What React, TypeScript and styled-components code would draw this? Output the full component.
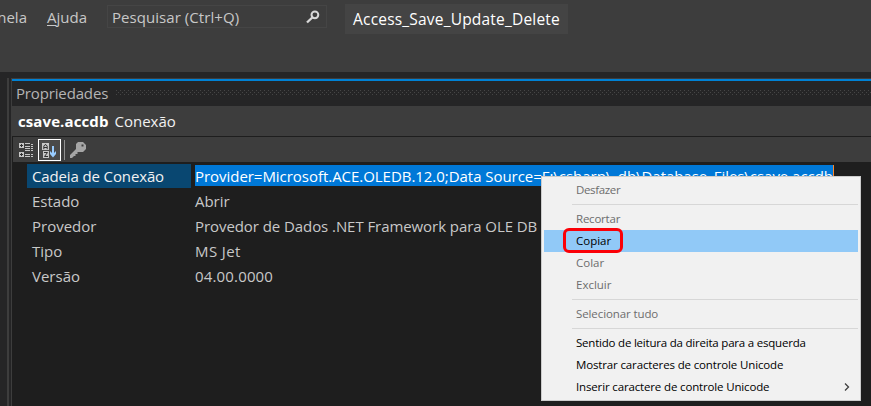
import React from "react";
import styled, { createGlobalStyle, css } from "styled-components";

const GlobalStyle = createGlobalStyle`
  * { box-sizing: border-box; }
  body {
    margin: 0;
    background: #252526;
    font-family: "Open Sans", "Noto Sans", sans-serif;
    font-size: 15px;
    color: #c8c8c8;
    overflow: hidden;
  }
`;

const Window = styled.div`
  position: relative;
  display: flex;
  flex-direction: column;
  width: 871px;
  height: 406px;
  overflow: hidden;
  white-space: nowrap;
`;

const TopBar = styled.header`
  display: flex;
  align-items: flex-start;
  flex: none;
  height: 72px;
  background: #3d3d3d;
  line-height: 22px;
`;

const MenuClip = styled.div`
  display: flex;
  justify-content: flex-end;
  width: 27px;
  padding-top: 6px;
`;

const MenuEntry = styled.div`
  width: 40px;
  margin-left: 20px;
  padding-top: 6px;

  &::first-letter {
    text-decoration: underline;
    text-decoration-thickness: 1px;
    text-underline-offset: 2px;
  }
`;

const SearchBox = styled.div`
  display: flex;
  align-items: center;
  justify-content: space-between;
  width: 220px;
  height: 23px;
  margin: 5px 0 0 20px;
  padding: 0 6px 0 4px;
  border: 1px solid #454545;
  letter-spacing: 0.06px;
`;

const SolutionName = styled.div`
  width: 223px;
  height: 30px;
  margin: 4px 0 0 18px;
  padding-left: 8px;
  background: #444444;
  color: #ffffff;
  font-size: 15.5px;
  font-weight: 500;
  letter-spacing: 0.2px;
  line-height: 31px;
`;

const Workspace = styled.div`
  display: flex;
  flex: 1;
  padding: 6px 0 0 7px;
`;

const Splitter = styled.div`
  width: 2px;
  margin-right: 2px;
  background: #3d3d3d;
`;

const Panel = styled.section`
  display: flex;
  flex-direction: column;
  flex: 1;
  border-top: 1px solid #3d3d3d;
  border-left: 1px solid #3d3d3d;
  background: #1e1e1e;
`;

const PanelTitle = styled.div`
  display: flex;
  height: 27px;
  padding-left: 4px;
  border-top: 2px solid #0081d4;
  background: #252526;
  color: #b4b4b4;
  line-height: 24px;
`;

const TitleText = styled.span`
  width: 100px;
  letter-spacing: -0.15px;
`;

const Grip = styled.div`
  flex: 1;
  height: 5px;
  margin-top: 9px;
  background:
    conic-gradient(from 270deg at 1px 1px, #464646 90deg, transparent 0) 0 0 / 4px 4px,
    conic-gradient(from 270deg at 1px 1px, #464646 90deg, transparent 0) 2px 2px / 4px 4px;
`;

const ObjectBar = styled.div`
  display: flex;
  gap: 6px;
  height: 30px;
  padding-left: 6px;
  background: #3d3d3d;
  color: #f1f1f1;
  line-height: 30px;
`;

const ObjectName = styled.strong`
  color: #ffffff;
  font-weight: 700;
  letter-spacing: 0.1px;
`;

const ToolBar = styled.div`
  display: flex;
  align-items: center;
  height: 25px;
  margin: 1px 0 0 1px;
  padding-left: 6px;
  background: #3d3d3d;
`;

const SortButton = styled.div`
  width: 23px;
  height: 22px;
  margin-left: 5px;
  border: 1px solid #ffffff;
  background: #4a4a4a;
`;

const Divider = styled.div`
  width: 1px;
  height: 20px;
  margin: 0 4px 0 3px;
  background: #909090;
`;

const Icon = styled.svg`
  display: block;
  flex: none;
`;

const Grid = styled.div`
  padding: 2px 0 0 15px;
`;

const Row = styled.div`
  display: grid;
  grid-template-columns: 164px 1fr;
  column-gap: 4px;
  height: 25px;
  line-height: 25px;
`;

const Label = styled.div<{ $selected?: boolean }>`
  height: 24px;
  padding-left: 5px;
  ${(p) => p.$selected && css`
    background: #094771;
    color: #f1f1f1;
    letter-spacing: -0.13px;
  `}
`;

const Value = styled.div<{ $selected?: boolean; $spacing?: number }>`
  justify-self: start;
  letter-spacing: ${(p) => p.$spacing ?? -0.05}px;
  ${(p) => p.$selected && css`
    width: 639px;
    height: 21px;
    margin-top: 1px;
    border-right: 1px solid #ff8728;
    background: #0078d7;
    color: #ffffff;
    line-height: 23px;
  `}
`;

const ContextMenu = styled.div`
  position: absolute;
  left: 541px;
  top: 176px;
  width: 320px;
  height: 225px;
  padding: 2px;
  border: 1px solid #cccccc;
  background: #f1f1f1;
  font-size: 11.5px;
  line-height: 20px;
`;

const MenuItem = styled.div<{ $enabled?: boolean; $active?: boolean; $spacing: number }>`
  display: flex;
  justify-content: space-between;
  align-items: center;
  height: 22px;
  padding: 0 6px 0 32px;
  background: ${(p) => (p.$active ? "#91c9f7" : "transparent")};
  color: ${(p) => (p.$enabled ? "#000000" : "#6d6d6d")};
  letter-spacing: ${(p) => p.$spacing}px;
`;

const Separator = styled.div`
  height: 7px;
  padding: 3px 0 0 28px;

  &::after {
    content: "";
    display: block;
    height: 1px;
    background: #d7d7d7;
  }
`;

const Highlight = styled.div`
  position: absolute;
  left: 21px;
  top: 51px;
  width: 60px;
  height: 25px;
  border: 3px solid #fb0007;
  border-radius: 6px;
`;

const SearchIcon = () => (
  <Icon width="14" height="14" viewBox="0 0 14 14" fill="none" stroke="#d8d8d8">
    <circle cx="8.9" cy="4.8" r="3.4" strokeWidth="2" />
    <path d="M6.3 7.5 1 12.5" strokeWidth="2.4" />
  </Icon>
);

const CategoryIcon = () => (
  <Icon width="14" height="16" viewBox="0 0 14 16" shapeRendering="crispEdges">
    <path fill="#c5c5c5" d="M0 1h5v5H0zM0 10h5v5H0zM6 1h5v1H6zM6 4h5v1H6zM6 6h5v1H6zM6 8h5v1H6zM6 12h5v1H6zM6 14h5v1H6zM12 2h2v1h-2zM12 4h2v1h-2zM12 6h2v1h-2zM12 8h2v1h-2zM12 12h2v1h-2zM12 14h2v1h-2z" />
    <path fill="#303030" d="M2 2h1v3H2zM1 3h3v1H1zM2 11h1v3H2zM1 12h3v1H1z" />
  </Icon>
);

const SortIcon = () => (
  <Icon width="21" height="20" viewBox="0 0 21 20">
    <path fill="#c8c8c8" d="M3 3h7v7H3zM4 11h6v7H4z" />
    <path d="M4.8 9.200V6.200L6 4.700h1L8.200 6.200V9.200M5 7.500h3" fill="none" stroke="#303030" strokeWidth="1" />
    <path d="M5 12.500h3.500L5.500 16.500h3.500" fill="none" stroke="#303030" strokeWidth="1" />
    <path fill="#99ccff" d="M13 6h2v7l2-2v3l-3 3.500-3-3.500v-3l2 2z" />
  </Icon>
);

const KeyIcon = () => (
  <Icon width="18" height="18" viewBox="0 0 18 18">
    <path
      fill="#a5a5a5"
      fillRule="evenodd"
      d="M9 1h5l3 3v4l-3 3h-3L8.500 11v2H6.500v2H5l-2 2H1v-3l6-6V3zM12.500 3.500v2h2v-2z"
    />
  </Icon>
);

const Chevron = () => (
  <Icon width="10" height="10" viewBox="0 0 10 10">
    <path d="M3 1.500 6.500 5 3 8.500" fill="none" stroke="#404040" strokeWidth="1.300" />
  </Icon>
);

const properties = [
  { name: "Cadeia de Conexão", value: "Provider=Microsoft.ACE.OLEDB.12.0;Data Source=F:\\csharp\\_db\\Database_Files\\csave.accdb", selected: true, spacing: -0.04 },
  { name: "Estado", value: "Abrir" },
  { name: "Provedor", value: "Provedor de Dados .NET Framework para OLE DB", spacing: -0.07 },
  { name: "Tipo", value: "MS Jet", spacing: 0.4 },
  { name: "Versão", value: "04.00.0000", spacing: 0.16 },
];

export default function App() {
  return (
    <>
      <GlobalStyle />
      <Window>
        <TopBar>
          <MenuClip>nela</MenuClip>
          <MenuEntry>Ajuda</MenuEntry>
          <SearchBox>
            <span>Pesquisar (Ctrl+Q)</span>
            <SearchIcon />
          </SearchBox>
          <SolutionName>Access_Save_Update_Delete</SolutionName>
        </TopBar>
        <Workspace>
          <Splitter />
          <Panel>
            <PanelTitle>
              <TitleText>Propriedades</TitleText>
              <Grip />
            </PanelTitle>
            <ObjectBar>
              <ObjectName>csave.accdb</ObjectName>
              <span>Conexão</span>
            </ObjectBar>
            <ToolBar>
              <CategoryIcon />
              <SortButton>
                <SortIcon />
              </SortButton>
              <Divider />
              <KeyIcon />
            </ToolBar>
            <Grid>
              {properties.map((p) => (
                <Row key={p.name}>
                  <Label $selected={p.selected}>{p.name}</Label>
                  <Value $selected={p.selected} $spacing={p.spacing}>{p.value}</Value>
                </Row>
              ))}
            </Grid>
          </Panel>
        </Workspace>
        <ContextMenu>
          <MenuItem $spacing={-0.35}>Desfazer</MenuItem>
          <Separator />
          <MenuItem $spacing={-0.22}>Recortar</MenuItem>
          <MenuItem $enabled $active $spacing={0}>Copiar</MenuItem>
          <MenuItem $spacing={0}>Colar</MenuItem>
          <MenuItem $spacing={0}>Excluir</MenuItem>
          <Separator />
          <MenuItem $spacing={-0.1}>Selecionar tudo</MenuItem>
          <Separator />
          <MenuItem $enabled $spacing={-0.21}>Sentido de leitura da direita para a esquerda</MenuItem>
          <MenuItem $enabled $spacing={-0.14}>Mostrar caracteres de controle Unicode</MenuItem>
          <MenuItem $enabled $spacing={-0.15}>
            Inserir caractere de controle Unicode
            <Chevron />
          </MenuItem>
          <Highlight />
        </ContextMenu>
      </Window>
    </>
  );
}
